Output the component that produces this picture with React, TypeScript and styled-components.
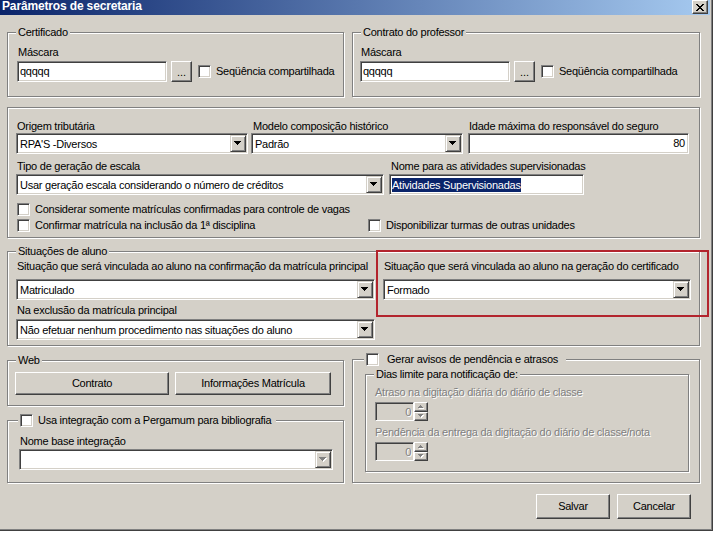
import React from "react";
import styled, { createGlobalStyle, css } from "styled-components";

const GlobalStyle = createGlobalStyle`
  html, body { margin: 0; padding: 0; background: #ffffff; }
  body { font-family: "Liberation Sans", Arial, sans-serif; font-size: 11px; color: #000; }
  *, *::before, *::after { box-sizing: border-box; }
`;

const sunken = css`
  border-style: solid;
  border-width: 1px;
  border-color: #808080 #ffffff #ffffff #808080;
  box-shadow: inset 1px 1px 0 #404040, inset -1px -1px 0 #d4d0c8;
`;

const raised = css`
  border-style: solid;
  border-width: 1px;
  border-color: #ffffff #404040 #404040 #ffffff;
  box-shadow: inset -1px -1px 0 #808080;
`;

const Window = styled.div`
  width: 713px;
  height: 531px;
  background: #d4d0c8;
  border-right: 1px solid #404040;
  border-bottom: 1px solid #404040;
  box-shadow: inset -1px -1px 0 #808080;
  display: flex;
  flex-direction: column;
  font-family: "Liberation Sans", Arial, sans-serif;
  font-size: 11px;
  letter-spacing: -0.25px;
  color: #000;
  overflow: hidden;
`;

const TitleBar = styled.div`
  flex: none;
  height: 15px;
  margin-right: 2px;
  padding: 0 2px;
  background: linear-gradient(to right, #0a246a 0%, #a6caf0 100%);
  display: flex;
  justify-content: space-between;
  align-items: flex-start;
`;

const TitleText = styled.span`
  color: #ffffff;
  font-weight: bold;
  font-size: 12px;
  line-height: 12px;
  letter-spacing: -0.15px;
  white-space: nowrap;
`;

const CloseButton = styled.div`
  ${raised};
  width: 16px;
  height: 14px;
  background: #d4d0c8;
  display: flex;
  align-items: center;
  justify-content: center;
`;

const Body = styled.div`
  flex: 1;
  display: flex;
  flex-direction: column;
  padding: 17px 12px 0 7px;
`;

const Row = styled.div<{ $mt?: number }>`
  display: flex;
  gap: 8px;
  align-items: flex-start;
  margin-top: ${(p) => p.$mt ?? 0}px;
`;

const Column = styled.div<{ $w: number; $gap: number; $mt?: number }>`
  width: ${(p) => p.$w}px;
  flex: none;
  display: flex;
  flex-direction: column;
  gap: ${(p) => p.$gap}px;
  margin-top: ${(p) => p.$mt ?? 0}px;
`;

const Group = styled.div<{ $w?: number; $h: number; $pad: string; $mt?: number }>`
  position: relative;
  flex: none;
  width: ${(p) => (p.$w ? `${p.$w}px` : "auto")};
  height: ${(p) => p.$h}px;
  padding: ${(p) => p.$pad};
  margin-top: ${(p) => p.$mt ?? 0}px;
  border: 1px solid #808080;
  box-shadow: inset 1px 1px 0 #ffffff, 1px 1px 0 #ffffff;
`;

const Legend = styled.div<{ $left?: number; $pr?: number; $gap?: number }>`
  position: absolute;
  top: -7px;
  left: ${(p) => p.$left ?? 8}px;
  height: 13px;
  line-height: 13px;
  padding: 0 ${(p) => p.$pr ?? 2}px 0 2px;
  background: #d4d0c8;
  display: flex;
  align-items: center;
  gap: ${(p) => p.$gap ?? 5}px;
  white-space: nowrap;
`;

const Label = styled.div<{ $indent?: number; $mt?: number; $disabled?: boolean }>`
  height: 13px;
  line-height: 13px;
  white-space: nowrap;
  padding-left: ${(p) => p.$indent ?? 0}px;
  margin-top: ${(p) => p.$mt ?? 0}px;
  color: ${(p) => (p.$disabled ? "#808080" : "#000000")};
  text-shadow: ${(p) => (p.$disabled ? "1px 1px 0 #ffffff" : "none")};
`;

const FieldGrid = styled.div<{ $cols: string; $gap: number; $mt?: number }>`
  display: grid;
  grid-template-columns: ${(p) => p.$cols};
  column-gap: ${(p) => p.$gap}px;
  align-items: start;
  margin-top: ${(p) => p.$mt ?? 0}px;
`;

const Field = styled.div<{ $gap?: number }>`
  display: flex;
  flex-direction: column;
  gap: ${(p) => p.$gap ?? 0}px;
  min-width: 0;
`;

const InlineRow = styled.div<{ $mt?: number }>`
  display: flex;
  align-items: center;
  margin-top: ${(p) => p.$mt ?? 0}px;
`;

const Edit = styled.div<{ $w: number; $right?: boolean }>`
  ${sunken};
  flex: none;
  width: ${(p) => p.$w}px;
  height: 21px;
  background: #ffffff;
  display: flex;
  align-items: center;
  justify-content: ${(p) => (p.$right ? "flex-end" : "flex-start")};
  padding: 0 3px 0 2px;
  line-height: 13px;
  white-space: nowrap;
  overflow: hidden;
`;

const Selected = styled.span`
  background: #0a246a;
  color: #ffffff;
  line-height: 14px;
`;

const Combo = styled.div<{ $w: number }>`
  ${sunken};
  flex: none;
  width: ${(p) => p.$w}px;
  height: 21px;
  background: #ffffff;
  padding: 1px;
  display: flex;
`;

const ComboText = styled.div`
  flex: 1;
  display: flex;
  align-items: center;
  padding-left: 2px;
  white-space: nowrap;
  overflow: hidden;
`;

const ComboButton = styled.div`
  flex: none;
  width: 16px;
  background: #d4d0c8;
  border-style: solid;
  border-width: 1px;
  border-color: #d4d0c8 #404040 #404040 #d4d0c8;
  box-shadow: inset 1px 1px 0 #ffffff, inset -1px -1px 0 #808080;
  display: flex;
  align-items: center;
  justify-content: center;
`;

const SmallButton = styled.div<{ $ml: number }>`
  ${raised};
  flex: none;
  width: 21px;
  height: 21px;
  margin-left: ${(p) => p.$ml}px;
  background: #d4d0c8;
  display: flex;
  align-items: flex-end;
  justify-content: center;
  padding-bottom: 5px;
  line-height: 8px;
  letter-spacing: 0;
`;

const CheckBox = styled.span`
  ${sunken};
  flex: none;
  display: inline-block;
  width: 13px;
  height: 13px;
  background: #ffffff;
`;

const CheckRow = styled.div<{ $gap?: number; $ml?: number; $indent?: number }>`
  display: flex;
  align-items: center;
  gap: ${(p) => p.$gap ?? 5}px;
  height: 13px;
  line-height: 13px;
  white-space: nowrap;
  margin-left: ${(p) => p.$ml ?? 0}px;
  padding-left: ${(p) => p.$indent ?? 0}px;
`;

const CheckGrid = styled.div<{ $mt: number }>`
  display: grid;
  grid-template-columns: 352px 1fr;
  row-gap: 3px;
  margin-top: ${(p) => p.$mt}px;
`;

const PushButton = styled.button<{ $w: number; $h: number }>`
  ${raised};
  flex: none;
  width: ${(p) => p.$w}px;
  height: ${(p) => p.$h}px;
  margin: 0;
  padding: 0;
  background: #d4d0c8;
  color: #000000;
  font-family: inherit;
  font-size: 11px;
  letter-spacing: inherit;
  line-height: 13px;
  cursor: default;
`;

const ButtonRow = styled.div<{ $gap: number }>`
  display: flex;
  gap: ${(p) => p.$gap}px;
`;

const Footer = styled.div`
  display: flex;
  justify-content: flex-end;
  gap: 7px;
  margin-top: 11px;
  padding-right: 9px;
`;

const Spin = styled.div`
  display: flex;
  width: 53px;
  height: 19px;
`;

const SpinEdit = styled.div`
  ${sunken};
  flex: 1;
  background: #d4d0c8;
  color: #808080;
  text-shadow: 1px 1px 0 #ffffff;
  display: flex;
  align-items: center;
  justify-content: flex-end;
  padding-right: 2px;
`;

const SpinButtons = styled.div`
  flex: none;
  width: 14px;
  display: flex;
  flex-direction: column;
`;

const SpinButton = styled.div`
  ${raised};
  flex: 1;
  background: #d4d0c8;
  display: flex;
  align-items: center;
  justify-content: center;
`;

const Highlight = styled.div`
  position: absolute;
  left: 368px;
  top: -2px;
  width: 333px;
  height: 67px;
  border: 2px solid #b3242d;
  pointer-events: none;
`;

const DOWN = "M0 0h7v1H0z M1 1h5v1H1z M2 2h3v1H2z M3 3h1v1H3z";

const DownArrow: React.FC<{ disabled?: boolean }> = ({ disabled }) => (
  <svg width="8" height="5" viewBox="0 0 8 5" shapeRendering="crispEdges">
    {disabled ? (
      <>
        <path d={DOWN} fill="#ffffff" transform="translate(1 1)" />
        <path d={DOWN} fill="#808080" />
      </>
    ) : (
      <path d={DOWN} fill="#000000" />
    )}
  </svg>
);

const SpinArrow: React.FC<{ up?: boolean }> = ({ up }) => {
  const d = up
    ? "M2 0h1v1H2z M1 1h3v1H1z M0 2h5v1H0z"
    : "M0 0h5v1H0z M1 1h3v1H1z M2 2h1v1H2z";
  return (
    <svg width="6" height="4" viewBox="0 0 6 4" shapeRendering="crispEdges">
      <path d={d} fill="#ffffff" transform="translate(1 1)" />
      <path d={d} fill="#808080" />
    </svg>
  );
};

const CloseGlyph = () => (
  <svg width="8" height="7" viewBox="0 0 8 7" shapeRendering="crispEdges">
    <path
      d="M0 0h2v1H0z M6 0h2v1H6z M1 1h2v1H1z M5 1h2v1H5z M2 2h4v1H2z M3 3h2v1H3z M2 4h4v1H2z M1 5h2v1H1z M5 5h2v1H5z M0 6h2v1H0z M6 6h2v1H6z"
      fill="#000000"
    />
  </svg>
);

const ComboBox: React.FC<{ w: number; value?: string; disabled?: boolean }> = ({ w, value, disabled }) => (
  <Combo $w={w}>
    <ComboText>{value}</ComboText>
    <ComboButton>
      <DownArrow disabled={disabled} />
    </ComboButton>
  </Combo>
);

const SpinEditBox: React.FC = () => (
  <Spin>
    <SpinEdit>0</SpinEdit>
    <SpinButtons>
      <SpinButton>
        <SpinArrow up />
      </SpinButton>
      <SpinButton>
        <SpinArrow />
      </SpinButton>
    </SpinButtons>
  </Spin>
);

const MaskGroup: React.FC<{ title: string; w: number; padLeft: number }> = ({ title, w, padLeft }) => (
  <Group $w={w} $h={65} $pad={`13px 0 0 ${padLeft}px`}>
    <Legend>{title}</Legend>
    <Label $indent={1}>Máscara</Label>
    <InlineRow $mt={2}>
      <Edit $w={150}>qqqqq</Edit>
      <SmallButton $ml={4}>...</SmallButton>
      <CheckRow $ml={6} $gap={5}>
        <CheckBox />
        Seqüência compartilhada
      </CheckRow>
    </InlineRow>
  </Group>
);

export default function App() {
  return (
    <>
      <GlobalStyle />
      <Window>
        <TitleBar>
          <TitleText>Parâmetros de secretaria</TitleText>
          <CloseButton>
            <CloseGlyph />
          </CloseButton>
        </TitleBar>
        <Body>
          <Row>
            <MaskGroup title="Certificado" w={337} padLeft={9} />
            <MaskGroup title="Contrato do professor" w={348} padLeft={7} />
          </Row>

          <Group $h={131} $pad="12px 0 0 8px" $mt={10}>
            <FieldGrid $cols="232px 212px 221px" $gap={3}>
              <Field>
                <Label $indent={1}>Origem tributária</Label>
                <ComboBox w={232} value="RPA'S -Diversos" />
              </Field>
              <Field>
                <Label $indent={2}>Modelo composição histórico</Label>
                <ComboBox w={212} value="Padrão" />
              </Field>
              <Field style={{ marginLeft: 2 }}>
                <Label $indent={1}>Idade máxima do responsável do seguro</Label>
                <Edit $w={221} $right>
                  80
                </Edit>
              </Field>
            </FieldGrid>
            <FieldGrid $cols="368px 195px" $gap={5} $mt={6}>
              <Field $gap={1}>
                <Label $indent={1}>Tipo de geração de escala</Label>
                <ComboBox w={368} value="Usar geração escala considerando o número de créditos" />
              </Field>
              <Field $gap={1}>
                <Label $indent={2}>Nome para as atividades supervisionadas</Label>
                <Edit $w={195}>
                  <Selected>Atividades Supervisionadas</Selected>
                </Edit>
              </Field>
            </FieldGrid>
            <CheckGrid $mt={8}>
              <CheckRow $indent={1} style={{ gridColumn: "1 / span 2" }}>
                <CheckBox />
                Considerar somente matrículas confirmadas para controle de vagas
              </CheckRow>
              <CheckRow $indent={1}>
                <CheckBox />
                Confirmar matrícula na inclusão da 1ª disciplina
              </CheckRow>
              <CheckRow>
                <CheckBox />
                Disponibilizar turmas de outras unidades
              </CheckRow>
            </CheckGrid>
          </Group>

          <Group $h={95} $pad="8px 0 0 8px" $mt={13}>
            <Legend>Situações de aluno</Legend>
            <FieldGrid $cols="359px 308px" $gap={8}>
              <Field $gap={6}>
                <Label $indent={1}>Situação que será vinculada ao aluno na confirmação da matrícula principal</Label>
                <ComboBox w={359} value="Matriculado" />
              </Field>
              <Field $gap={6}>
                <Label $indent={1}>Situação que será vinculada ao aluno na geração do certificado</Label>
                <ComboBox w={308} value="Formado" />
              </Field>
            </FieldGrid>
            <Field $gap={2}>
              <Label $indent={1} $mt={4}>
                Na exclusão da matrícula principal
              </Label>
              <ComboBox w={359} value="Não efetuar nenhum procedimento nas situações do aluno" />
            </Field>
            <Highlight />
          </Group>

          <Row $mt={13}>
            <Column $w={337} $gap={14} $mt={1}>
              <Group $h={46} $pad="11px 0 0 7px">
                <Legend>Web</Legend>
                <ButtonRow $gap={6}>
                  <PushButton $w={154} $h={23}>Contrato</PushButton>
                  <PushButton $w={156} $h={23}>Informações Matrícula</PushButton>
                </ButtonRow>
              </Group>
              <Group $h={63} $pad="14px 0 0 11px">
                <Legend $left={10} $pr={5}>
                  <CheckBox />
                  Usa integração com a Pergamum para bibliografia
                </Legend>
                <Field $gap={1}>
                  <Label $indent={1}>Nome base integração</Label>
                  <ComboBox w={314} disabled />
                </Field>
              </Group>
            </Column>
            <Group $w={348} $h={124} $pad="14px 10px 0 12px">
              <Legend $left={11} $pr={8} $gap={8}>
                <CheckBox />
                Gerar avisos de pendência e atrasos
              </Legend>
              <Group $h={98} $pad="11px 0 0 9px">
                <Legend>Dias limite para notificação de:</Legend>
                <Field $gap={3}>
                  <Label $disabled>Atraso na digitação diária do diário de classe</Label>
                  <SpinEditBox />
                </Field>
                <Field $gap={3}>
                  <Label $disabled $mt={5}>
                    Pendência da entrega da digitação do diário de classe/nota
                  </Label>
                  <SpinEditBox />
                </Field>
              </Group>
            </Group>
          </Row>

          <Footer>
            <PushButton $w={74} $h={25}>Salvar</PushButton>
            <PushButton $w={74} $h={25}>Cancelar</PushButton>
          </Footer>
        </Body>
      </Window>
    </>
  );
}
